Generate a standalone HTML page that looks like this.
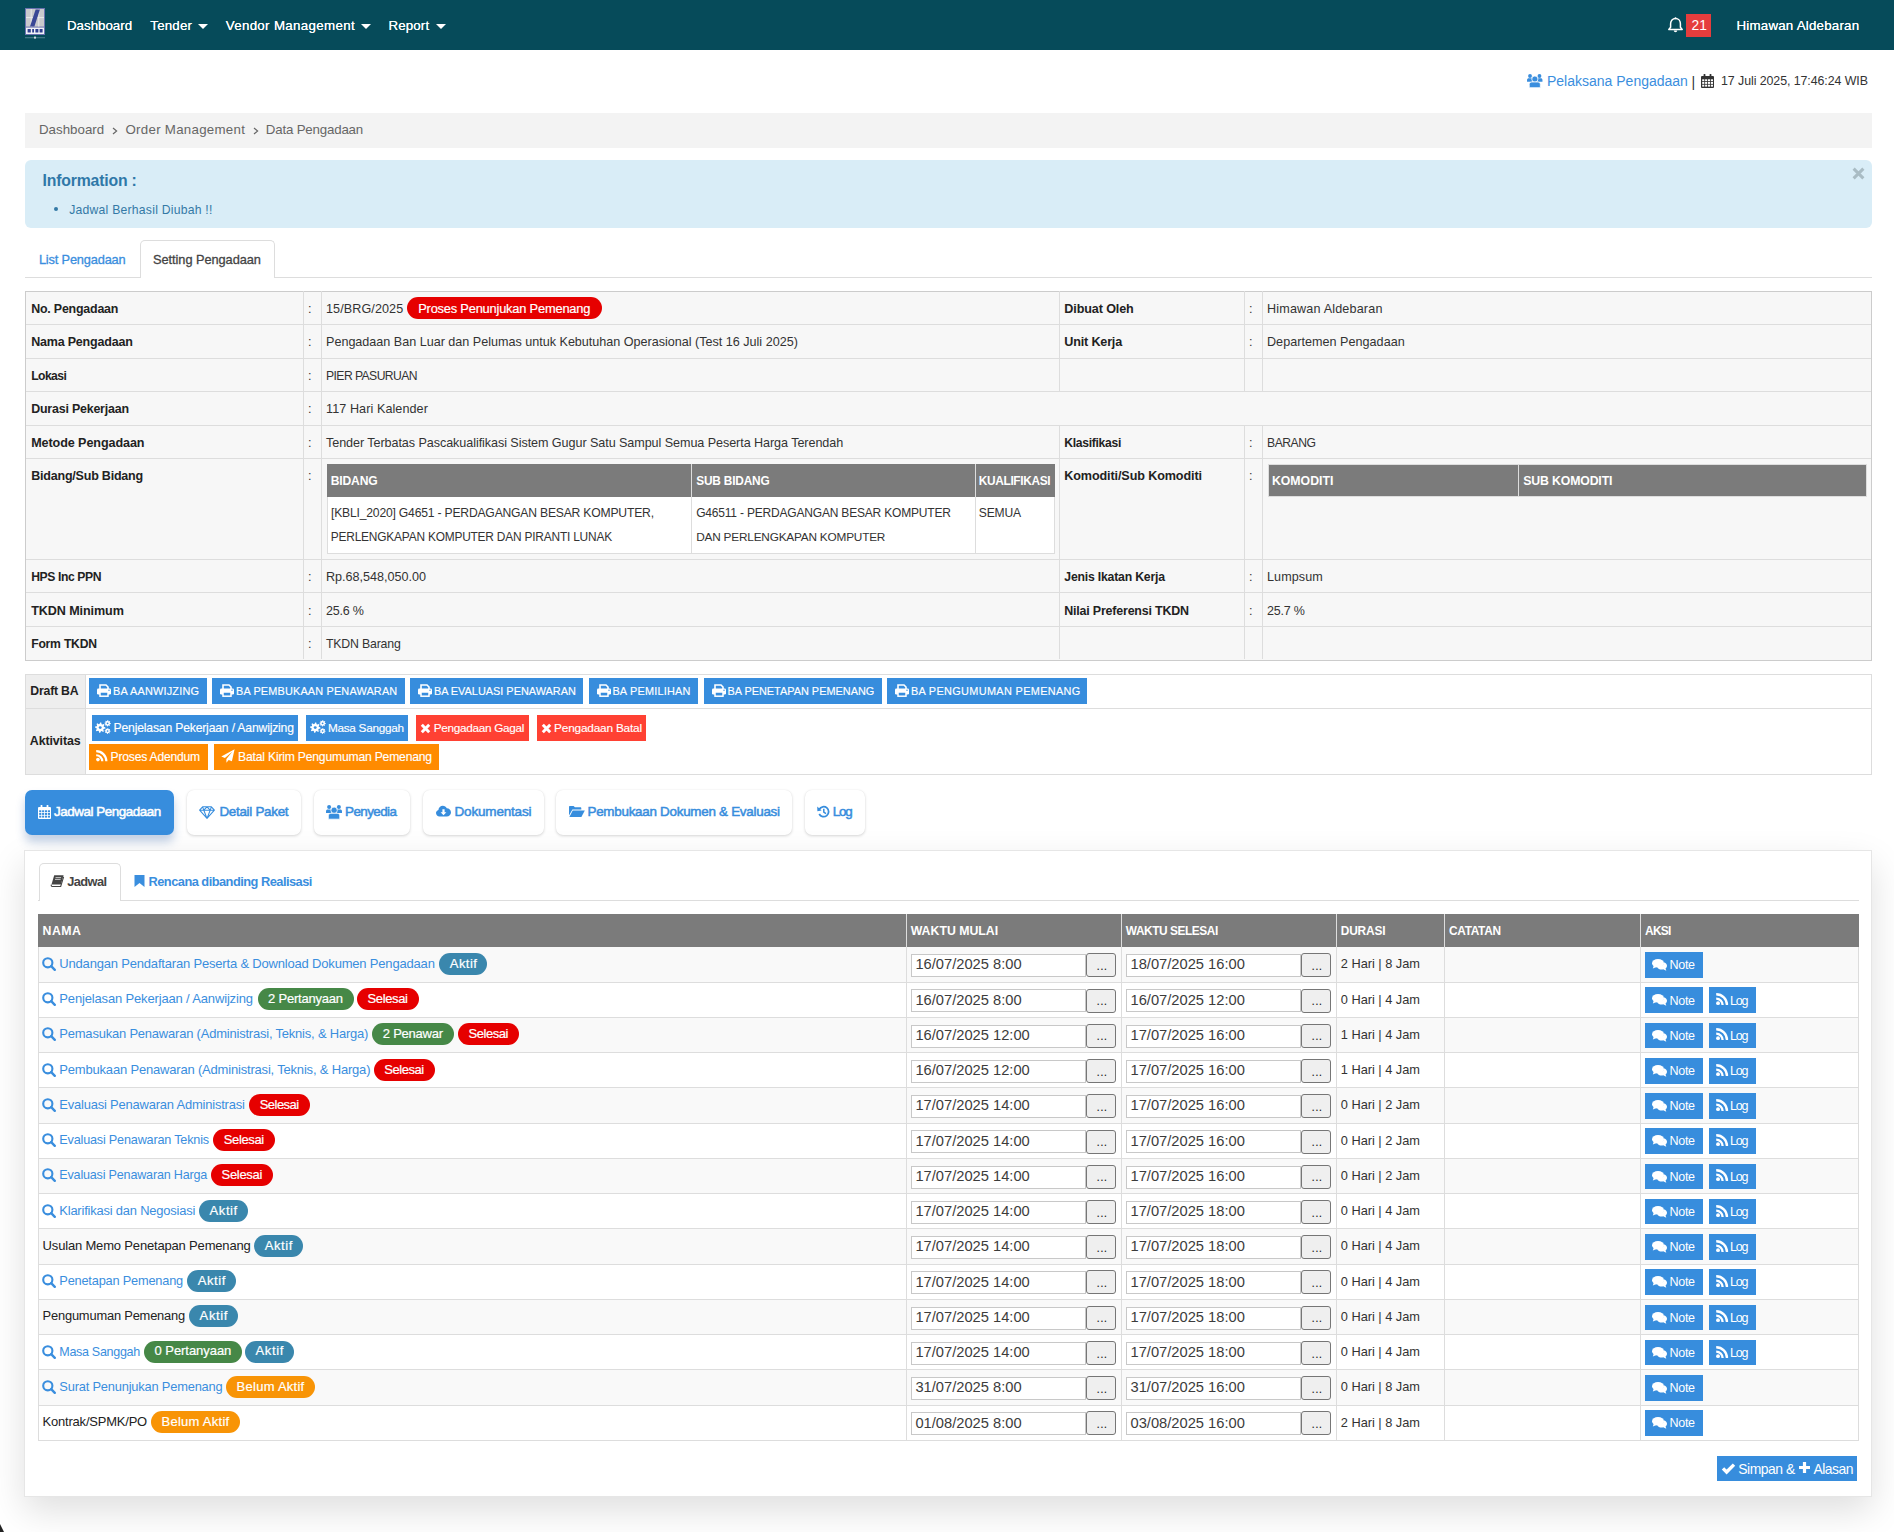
<!DOCTYPE html>
<html><head><meta charset="utf-8"><title>Data Pengadaan</title>
<style>
*{box-sizing:border-box}
html,body{margin:0;padding:0}
body{width:1894px;height:1532px;overflow:hidden;position:relative;background:#fff;font-family:"Liberation Sans",sans-serif;font-size:13px;color:#333}
div,span{white-space:nowrap}
.a{position:absolute}
svg{position:absolute;overflow:visible}
.t{position:absolute;line-height:16px;white-space:nowrap}
.caret{position:absolute;width:0;height:0;border-left:5px solid transparent;border-right:5px solid transparent;border-top:5px solid #fff}
.hl{position:absolute;height:1px;background:#ddd}
.vl{position:absolute;width:1px;background:#ddd}
.badge{position:absolute;border-radius:11px;color:#fff;height:22px;line-height:22px;text-align:center;font-size:13px;letter-spacing:-0.25px;white-space:nowrap}
.bred{background:#e60000}
.bblue{background:#3a87ad}
.bgreen{background:#468847}
.borange{background:#f89406}
.btn{position:absolute;color:#fff;white-space:nowrap}
.bb{background:#378ddd}
.br{background:#ff4133}
.bo{background:#ff8b00}
.tb{position:absolute;top:790px;height:45px;border-radius:7px;background:#fff;box-shadow:0 1px 3px rgba(0,0,0,0.16),0 0 1px rgba(0,0,0,0.08);color:#378ddd}
.tb.act{background:#378ddd;color:#fff;box-shadow:0 7px 10px rgba(40,90,160,0.28)}
.lnk{color:#3a8ede}
.inp{position:absolute;height:23px;border:1px solid #c8c8c8;background:#fff;font-size:14.7px;line-height:21px;padding-left:3px;color:#333}
.dots{position:absolute;height:24px;border:1px solid #767676;border-radius:3px;background:#efefef;font-size:12px;text-align:center;color:#000}
.sb{position:absolute;height:26px;background:#378ddd;color:#fff}
</style></head>
<body>
<div class="a" style="left:0;top:0;width:1894px;height:50px;background:#064b5a"></div>
<svg style="left:25px;top:8px" width="20" height="31" viewBox="0 0 20 31">
<rect x="0" y="0" width="20" height="27" fill="#6a72b0"/>
<rect x="1" y="1" width="18" height="17.6" fill="#c9c9cc"/>
<path d="M1 9.6H19M6.2 1V18.6M13.8 1V18.6" stroke="#ececec" stroke-width="0.9"/>
<path d="M10.6 1.5L14.9 1.5L9.4 18.6L5 18.6Z" fill="#3a4796"/>
<rect x="1" y="19.6" width="18" height="6.4" fill="#f2f2f6"/>
<path d="M2.6 21h3.2v3.6H2.6zM7.2 21h1.8v3.6H7.2zM10.4 21h3v3.6h-3zM14.6 21h3v3.6h-3z" fill="#2f3f8f"/>
<rect x="0" y="29" width="20" height="1.3" fill="#3f7583"/><rect x="9" y="28.6" width="2" height="2" fill="#cfd8dc"/>
</svg>
<div class="t" style="left:67px;top:18.29px;font-size:13.3px;color:#fff;letter-spacing:0.005px;text-shadow:0 0 0.4px #fff">Dashboard</div>
<div class="t" style="left:150.3px;top:18.29px;font-size:13.3px;color:#fff;letter-spacing:0.206px;text-shadow:0 0 0.4px #fff">Tender</div>
<div class="caret" style="left:198px;top:24px"></div>
<div class="t" style="left:225.7px;top:18.29px;font-size:13.3px;color:#fff;letter-spacing:0.34px;text-shadow:0 0 0.4px #fff">Vendor Management</div>
<div class="caret" style="left:361px;top:24px"></div>
<div class="t" style="left:388.6px;top:18.29px;font-size:13.3px;color:#fff;letter-spacing:0.116px;text-shadow:0 0 0.4px #fff">Report</div>
<div class="caret" style="left:435.5px;top:24px"></div>
<svg style="left:1667.5px;top:17px" width="15" height="16" viewBox="0 0 15 16"><path d="M7.5 1.6c-2.9 0-4.9 2.2-4.9 5.2v3.4L.8 12.4h13.4l-1.8-2.2V6.8c0-3-2-5.2-4.9-5.2z" fill="none" stroke="#fff" stroke-width="1.5" stroke-linejoin="round"/><path d="M5.8 13.6c0 1 .8 1.7 1.7 1.7s1.7-.7 1.7-1.7z" fill="#fff"/><circle cx="7.5" cy="1.3" r="1" fill="#fff"/></svg>
<div class="a" style="left:1686px;top:14px;width:25px;height:23px;background:#e53d3d"></div>
<div class="t" style="left:1691.5px;top:17.72px;font-size:13.8px;color:#fff;letter-spacing:0px;">21</div>
<div class="t" style="left:1736.5px;top:18.29px;font-size:13.3px;color:#fff;letter-spacing:0.224px;text-shadow:0 0 0.4px #fff">Himawan Aldebaran</div>
<svg style="left:1527.3px;top:74.2px" width="15.5" height="13.5" viewBox="0 0 16 14"><g fill="#3a8ede"><circle cx="3.1" cy="2.1" r="2"/><circle cx="12.9" cy="2.1" r="2"/><path d="M0 8.1V6.2C0 5.2.8 4.5 1.8 4.5h2.6c.6 0 1 .3 1 .8v2.8z"/><path d="M16 8.1V6.2c0-1-.8-1.7-1.8-1.7h-2.6c-.6 0-1 .3-1 .8v2.8z"/></g><circle cx="8.1" cy="5.3" r="3.2" fill="#3a8ede" stroke="#fff" stroke-width=".8"/><path d="M2.3 14.2v-3.3c0-1.6 1.1-2.6 2.6-2.6h6.3c1.5 0 2.6 1 2.6 2.6v3.3z" fill="#3a8ede" stroke="#fff" stroke-width=".8"/></svg>
<div class="t" style="left:1547px;top:72.65px;font-size:14px;color:#3a8ede;letter-spacing:0px;">Pelaksana Pengadaan</div>
<div class="t" style="left:1691.5px;top:73.65px;font-size:14px;color:#333;letter-spacing:0px;">|</div>
<svg style="left:1700.8px;top:74px" width="13" height="14" viewBox="0 0 13 14"><rect x="0" y="2" width="13" height="12" rx="1" fill="#333"/><rect x="2.6" y="0" width="1.8" height="3.6" rx=".5" fill="#333"/><rect x="8.6" y="0" width="1.8" height="3.6" rx=".5" fill="#333"/><rect x="2.8" y="0.6" width="1.2" height="2.4" fill="#fff" opacity="0"/><rect x="1.2" y="5.3" width="2.1" height="1.9" fill="#fff"/><rect x="4.1" y="5.3" width="2.1" height="1.9" fill="#fff"/><rect x="7.0" y="5.3" width="2.1" height="1.9" fill="#fff"/><rect x="9.9" y="5.3" width="2.1" height="1.9" fill="#fff"/><rect x="1.2" y="8.0" width="2.1" height="1.9" fill="#fff"/><rect x="4.1" y="8.0" width="2.1" height="1.9" fill="#fff"/><rect x="7.0" y="8.0" width="2.1" height="1.9" fill="#fff"/><rect x="9.9" y="8.0" width="2.1" height="1.9" fill="#fff"/><rect x="1.2" y="10.7" width="2.1" height="1.9" fill="#fff"/><rect x="4.1" y="10.7" width="2.1" height="1.9" fill="#fff"/><rect x="7.0" y="10.7" width="2.1" height="1.9" fill="#fff"/><rect x="9.9" y="10.7" width="2.1" height="1.9" fill="#fff"/></svg>
<div class="t" style="left:1721px;top:73.20px;font-size:12.4px;color:#333;letter-spacing:-0.072px;">17 Juli 2025, 17:46:24 WIB</div>
<div class="a" style="left:25px;top:113px;width:1847px;height:35px;background:#f3f3f3"></div>
<div class="t" style="left:39px;top:122.39px;font-size:13.3px;color:#666;letter-spacing:0.017px;">Dashboard</div>
<svg style="left:112px;top:127px" width="6" height="8" viewBox="0 0 6 8"><path d="M1 1l3.6 3-3.6 3" fill="none" stroke="#666" stroke-width="1.2"/></svg>
<div class="t" style="left:125.5px;top:122.39px;font-size:13.3px;color:#666;letter-spacing:0.274px;">Order Management</div>
<svg style="left:252.5px;top:127px" width="6" height="8" viewBox="0 0 6 8"><path d="M1 1l3.6 3-3.6 3" fill="none" stroke="#666" stroke-width="1.2"/></svg>
<div class="t" style="left:265.8px;top:122.39px;font-size:13.3px;color:#666;letter-spacing:-0.186px;">Data Pengadaan</div>
<div class="a" style="left:25px;top:160px;width:1847px;height:68px;background:#d9edf7;border-radius:6px"></div>
<div class="t" style="left:42.6px;top:172.53px;font-size:15.8px;color:#2f78a8;font-weight:bold;letter-spacing:-0.194px;">Information :</div>
<div class="a" style="left:54px;top:206.5px;width:4px;height:4px;border-radius:50%;background:#3479a6"></div>
<div class="t" style="left:69.2px;top:201.57px;font-size:12.2px;color:#3479a6;letter-spacing:0.236px;">Jadwal Berhasil Diubah !!</div>
<svg style="left:1851.5px;top:166.5px" width="13" height="13" viewBox="0 0 12 12"><path d="M1.5 1.5L10.5 10.5M10.5 1.5L1.5 10.5" stroke="#a9bcc4" stroke-width="2.8"/></svg>
<div class="hl" style="left:25px;top:277px;width:1847px;background:#ddd"></div>
<div class="a" style="left:140px;top:240px;width:135px;height:38px;border:1px solid #ddd;border-bottom:none;border-radius:5px 5px 0 0;background:#fff"></div>
<div class="t" style="left:38.9px;top:251.86px;font-size:12.8px;color:#3a8ede;letter-spacing:-0.166px;-webkit-text-stroke:0.3px #3a8ede">List Pengadaan</div>
<div class="t" style="left:153px;top:251.86px;font-size:12.8px;color:#444;letter-spacing:-0.055px;-webkit-text-stroke:0.3px #444">Setting Pengadaan</div>
<div class="a" style="left:25px;top:291px;width:1847px;height:369.5px;background:#f7f7f7;border:1px solid #ccc"></div>
<div class="hl" style="left:26px;top:324px;width:1845px"></div>
<div class="hl" style="left:26px;top:358px;width:1845px"></div>
<div class="hl" style="left:26px;top:391px;width:1845px"></div>
<div class="hl" style="left:26px;top:425px;width:1845px"></div>
<div class="hl" style="left:26px;top:458px;width:1845px"></div>
<div class="hl" style="left:26px;top:559px;width:1845px"></div>
<div class="hl" style="left:26px;top:592px;width:1845px"></div>
<div class="hl" style="left:26px;top:626px;width:1845px"></div>
<div class="vl" style="left:303px;top:291px;height:33px"></div>
<div class="vl" style="left:321px;top:291px;height:33px"></div>
<div class="vl" style="left:1059px;top:291px;height:33px"></div>
<div class="vl" style="left:1244px;top:291px;height:33px"></div>
<div class="vl" style="left:1262px;top:291px;height:33px"></div>
<div class="vl" style="left:303px;top:324px;height:34px"></div>
<div class="vl" style="left:321px;top:324px;height:34px"></div>
<div class="vl" style="left:1059px;top:324px;height:34px"></div>
<div class="vl" style="left:1244px;top:324px;height:34px"></div>
<div class="vl" style="left:1262px;top:324px;height:34px"></div>
<div class="vl" style="left:303px;top:358px;height:33px"></div>
<div class="vl" style="left:321px;top:358px;height:33px"></div>
<div class="vl" style="left:1059px;top:358px;height:33px"></div>
<div class="vl" style="left:1244px;top:358px;height:33px"></div>
<div class="vl" style="left:1262px;top:358px;height:33px"></div>
<div class="vl" style="left:303px;top:391px;height:34px"></div>
<div class="vl" style="left:321px;top:391px;height:34px"></div>
<div class="vl" style="left:303px;top:425px;height:33px"></div>
<div class="vl" style="left:321px;top:425px;height:33px"></div>
<div class="vl" style="left:1059px;top:425px;height:33px"></div>
<div class="vl" style="left:1244px;top:425px;height:33px"></div>
<div class="vl" style="left:1262px;top:425px;height:33px"></div>
<div class="vl" style="left:303px;top:458px;height:101px"></div>
<div class="vl" style="left:321px;top:458px;height:101px"></div>
<div class="vl" style="left:1059px;top:458px;height:101px"></div>
<div class="vl" style="left:1244px;top:458px;height:101px"></div>
<div class="vl" style="left:1262px;top:458px;height:101px"></div>
<div class="vl" style="left:303px;top:559px;height:33px"></div>
<div class="vl" style="left:321px;top:559px;height:33px"></div>
<div class="vl" style="left:1059px;top:559px;height:33px"></div>
<div class="vl" style="left:1244px;top:559px;height:33px"></div>
<div class="vl" style="left:1262px;top:559px;height:33px"></div>
<div class="vl" style="left:303px;top:592px;height:34px"></div>
<div class="vl" style="left:321px;top:592px;height:34px"></div>
<div class="vl" style="left:1059px;top:592px;height:34px"></div>
<div class="vl" style="left:1244px;top:592px;height:34px"></div>
<div class="vl" style="left:1262px;top:592px;height:34px"></div>
<div class="vl" style="left:303px;top:626px;height:33px"></div>
<div class="vl" style="left:321px;top:626px;height:33px"></div>
<div class="vl" style="left:1059px;top:626px;height:33px"></div>
<div class="vl" style="left:1244px;top:626px;height:33px"></div>
<div class="vl" style="left:1262px;top:626px;height:33px"></div>
<div class="t" style="left:31.2px;top:300.85px;font-size:12.41px;color:#222;font-weight:bold;letter-spacing:-0.202px;">No. Pengadaan</div>
<div class="t" style="left:308px;top:300.78px;font-size:12.6px;color:#333;letter-spacing:0px;">:</div>
<div class="t" style="left:326px;top:300.78px;font-size:12.6px;color:#333;letter-spacing:0.087px;">15/BRG/2025</div>
<div class="t" style="left:31.2px;top:334.47px;font-size:12.5px;color:#222;font-weight:bold;letter-spacing:-0.201px;">Nama Pengadaan</div>
<div class="t" style="left:308px;top:334.43px;font-size:12.6px;color:#333;letter-spacing:0px;">:</div>
<div class="t" style="left:326px;top:334.43px;font-size:12.6px;color:#333;letter-spacing:-0.01px;">Pengadaan Ban Luar dan Pelumas untuk Kebutuhan Operasional (Test 16 Juli 2025)</div>
<div class="t" style="left:31.2px;top:367.99px;font-size:12.16px;color:#222;font-weight:bold;letter-spacing:-0.563px;">Lokasi</div>
<div class="t" style="left:308px;top:367.83px;font-size:12.6px;color:#333;letter-spacing:0px;">:</div>
<div class="t" style="left:326px;top:367.99px;font-size:12.16px;color:#333;letter-spacing:-0.567px;">PIER PASURUAN</div>
<div class="t" style="left:31.2px;top:401.44px;font-size:12.43px;color:#222;font-weight:bold;letter-spacing:-0.202px;">Durasi Pekerjaan</div>
<div class="t" style="left:308px;top:401.38px;font-size:12.6px;color:#333;letter-spacing:0px;">:</div>
<div class="t" style="left:326px;top:401.38px;font-size:12.6px;color:#333;letter-spacing:0.083px;">117 Hari Kalender</div>
<div class="t" style="left:31.2px;top:434.98px;font-size:12.6px;color:#222;font-weight:bold;letter-spacing:-0.098px;">Metode Pengadaan</div>
<div class="t" style="left:308px;top:434.98px;font-size:12.6px;color:#333;letter-spacing:0px;">:</div>
<div class="t" style="left:326px;top:434.98px;font-size:12.6px;color:#333;letter-spacing:-0.07px;">Tender Terbatas Pascakualifikasi Sistem Gugur Satu Sampul Semua Peserta Harga Terendah</div>
<div class="t" style="left:31.2px;top:569.04px;font-size:12.16px;color:#222;font-weight:bold;letter-spacing:-0.401px;">HPS Inc PPN</div>
<div class="t" style="left:308px;top:568.88px;font-size:12.6px;color:#333;letter-spacing:0px;">:</div>
<div class="t" style="left:326px;top:568.88px;font-size:12.6px;color:#333;letter-spacing:-0.003px;">Rp.68,548,050.00</div>
<div class="t" style="left:31.2px;top:602.53px;font-size:12.6px;color:#222;font-weight:bold;letter-spacing:-0.095px;">TKDN Minimum</div>
<div class="t" style="left:308px;top:602.53px;font-size:12.6px;color:#333;letter-spacing:0px;">:</div>
<div class="t" style="left:326px;top:602.56px;font-size:12.53px;color:#333;letter-spacing:-0.194px;">25.6 %</div>
<div class="t" style="left:31.2px;top:636.24px;font-size:12.16px;color:#222;font-weight:bold;letter-spacing:-0.216px;">Form TKDN</div>
<div class="t" style="left:308px;top:636.08px;font-size:12.6px;color:#333;letter-spacing:0px;">:</div>
<div class="t" style="left:326px;top:636.17px;font-size:12.34px;color:#333;letter-spacing:-0.195px;">TKDN Barang</div>
<div class="t" style="left:1064.3px;top:300.78px;font-size:12.6px;color:#222;font-weight:bold;letter-spacing:-0.117px;">Dibuat Oleh</div>
<div class="t" style="left:1249px;top:300.78px;font-size:12.6px;color:#333;letter-spacing:0px;">:</div>
<div class="t" style="left:1267px;top:300.78px;font-size:12.6px;color:#333;letter-spacing:0.168px;">Himawan Aldebaran</div>
<div class="t" style="left:1064.3px;top:334.43px;font-size:12.6px;color:#222;font-weight:bold;letter-spacing:-0.176px;">Unit Kerja</div>
<div class="t" style="left:1249px;top:334.43px;font-size:12.6px;color:#333;letter-spacing:0px;">:</div>
<div class="t" style="left:1267px;top:334.43px;font-size:12.6px;color:#333;letter-spacing:0.025px;">Departemen Pengadaan</div>
<div class="t" style="left:1064.3px;top:435.14px;font-size:12.16px;color:#222;font-weight:bold;letter-spacing:-0.314px;">Klasifikasi</div>
<div class="t" style="left:1249px;top:434.98px;font-size:12.6px;color:#333;letter-spacing:0px;">:</div>
<div class="t" style="left:1267px;top:435.14px;font-size:12.16px;color:#333;letter-spacing:-0.469px;">BARANG</div>
<div class="t" style="left:1064.3px;top:569.01px;font-size:12.25px;color:#222;font-weight:bold;letter-spacing:-0.205px;">Jenis Ikatan Kerja</div>
<div class="t" style="left:1249px;top:568.88px;font-size:12.6px;color:#333;letter-spacing:0px;">:</div>
<div class="t" style="left:1267px;top:568.88px;font-size:12.6px;color:#333;letter-spacing:0.067px;">Lumpsum</div>
<div class="t" style="left:1064.3px;top:602.58px;font-size:12.46px;color:#222;font-weight:bold;letter-spacing:-0.202px;">Nilai Preferensi TKDN</div>
<div class="t" style="left:1249px;top:602.53px;font-size:12.6px;color:#333;letter-spacing:0px;">:</div>
<div class="t" style="left:1267px;top:602.57px;font-size:12.5px;color:#333;letter-spacing:-0.204px;">25.7 %</div>
<div class="t" style="left:31.2px;top:467.67px;font-size:12.5px;color:#222;font-weight:bold;letter-spacing:-0.205px;">Bidang/Sub Bidang</div>
<div class="t" style="left:308px;top:467.63px;font-size:12.6px;color:#333;letter-spacing:0px;">:</div>
<div class="t" style="left:1064.3px;top:467.63px;font-size:12.6px;color:#222;font-weight:bold;letter-spacing:-0.111px;">Komoditi/Sub Komoditi</div>
<div class="t" style="left:1249px;top:467.63px;font-size:12.6px;color:#333;letter-spacing:0px;">:</div>
<div class="badge bred" style="left:407.3px;top:297px;width:194.3px;height:22.3px"></div>
<div class="t" style="left:418.2px;top:300.75px;font-size:12.85px;color:#fff;letter-spacing:-0.196px;-webkit-text-stroke:0.2px #fff">Proses Penunjukan Pemenang</div>
<div class="a" style="left:326.5px;top:463.9px;width:728px;height:90.5px;background:#fff;border:1px solid #ddd"></div>
<div class="a" style="left:326.5px;top:463.9px;width:728px;height:33px;background:#7b7b7b"></div>
<div class="vl" style="left:691px;top:463.9px;height:90.5px"></div>
<div class="vl" style="left:974.5px;top:463.9px;height:90.5px"></div>
<div class="t" style="left:330.8px;top:472.79px;font-size:12.14px;color:#fff;font-weight:bold;letter-spacing:-0.186px;">BIDANG</div>
<div class="t" style="left:696.2px;top:472.88px;font-size:11.89px;color:#fff;font-weight:bold;letter-spacing:-0.191px;">SUB BIDANG</div>
<div class="t" style="left:978.8px;top:472.89px;font-size:11.87px;color:#fff;font-weight:bold;letter-spacing:-0.331px;">KUALIFIKASI</div>
<div class="t" style="left:331px;top:504.79px;font-size:12.16px;color:#333;letter-spacing:-0.204px;">[KBLI_2020] G4651 - PERDAGANGAN BESAR KOMPUTER,</div>
<div class="t" style="left:330.8px;top:529.37px;font-size:11.92px;color:#333;letter-spacing:-0.2px;">PERLENGKAPAN KOMPUTER DAN PIRANTI LUNAK</div>
<div class="t" style="left:696.2px;top:504.83px;font-size:12.03px;color:#333;letter-spacing:-0.201px;">G46511 - PERDAGANGAN BESAR KOMPUTER</div>
<div class="t" style="left:696.2px;top:529.40px;font-size:11.82px;color:#333;letter-spacing:-0.203px;">DAN PERLENGKAPAN KOMPUTER</div>
<div class="t" style="left:978.8px;top:504.81px;font-size:12.1px;color:#333;letter-spacing:-0.204px;">SEMUA</div>
<div class="a" style="left:1268px;top:464px;width:598.5px;height:33px;background:#7b7b7b;border:1px solid #ddd"></div>
<div class="vl" style="left:1518px;top:464px;height:33px"></div>
<div class="t" style="left:1271.9px;top:472.74px;font-size:12.3px;color:#fff;font-weight:bold;letter-spacing:0.002px;">KOMODITI</div>
<div class="t" style="left:1523.3px;top:472.74px;font-size:12.3px;color:#fff;font-weight:bold;letter-spacing:-0.16px;">SUB KOMODITI</div>
<div class="a" style="left:25px;top:673.5px;width:1847px;height:101px;border:1px solid #ddd;background:#fff"></div>
<div class="a" style="left:26px;top:674.5px;width:59.5px;height:99px;background:#eee"></div>
<div class="vl" style="left:85.4px;top:673.5px;height:101px"></div>
<div class="hl" style="left:26px;top:708px;width:1845px"></div>
<div class="t" style="left:30.3px;top:682.55px;font-size:12.26px;color:#222;font-weight:bold;letter-spacing:-0.198px;">Draft BA</div>
<div class="t" style="left:29.8px;top:733.20px;font-size:12.4px;color:#222;font-weight:bold;letter-spacing:-0.095px;">Aktivitas</div>
<div class="btn bb" style="left:89.2px;top:678.1px;width:117.7px;height:25.9px"></div><svg style="left:96.8px;top:683.6px" width="14.0" height="13" viewBox="0 0 14 13"><rect x="0" y="4.5" width="14" height="6" rx="1.3" fill="#fff"/><path d="M3 5V1h6l2 2v2" fill="none" stroke="#fff" stroke-width="1.6"/><rect x="3" y="8" width="8" height="4.2" fill="#378ddd" stroke="#fff" stroke-width="1.5"/><circle cx="12" cy="6.3" r="0.7" fill="#378ddd"/></svg><div class="t" style="left:113px;top:683.27px;font-size:10.9px;color:#fff;letter-spacing:0.207px;-webkit-text-stroke:0.15px #fff">BA AANWIJZING</div>
<div class="btn bb" style="left:212.1px;top:678.1px;width:192.7px;height:25.9px"></div><svg style="left:219.7px;top:683.6px" width="14.0" height="13" viewBox="0 0 14 13"><rect x="0" y="4.5" width="14" height="6" rx="1.3" fill="#fff"/><path d="M3 5V1h6l2 2v2" fill="none" stroke="#fff" stroke-width="1.6"/><rect x="3" y="8" width="8" height="4.2" fill="#378ddd" stroke="#fff" stroke-width="1.5"/><circle cx="12" cy="6.3" r="0.7" fill="#378ddd"/></svg><div class="t" style="left:236px;top:683.27px;font-size:10.9px;color:#fff;letter-spacing:0.164px;-webkit-text-stroke:0.15px #fff">BA PEMBUKAAN PENAWARAN</div>
<div class="btn bb" style="left:410.1px;top:678.1px;width:172.9px;height:25.9px"></div><svg style="left:417.70000000000005px;top:683.6px" width="14.0" height="13" viewBox="0 0 14 13"><rect x="0" y="4.5" width="14" height="6" rx="1.3" fill="#fff"/><path d="M3 5V1h6l2 2v2" fill="none" stroke="#fff" stroke-width="1.6"/><rect x="3" y="8" width="8" height="4.2" fill="#378ddd" stroke="#fff" stroke-width="1.5"/><circle cx="12" cy="6.3" r="0.7" fill="#378ddd"/></svg><div class="t" style="left:433.9px;top:683.27px;font-size:10.9px;color:#fff;letter-spacing:0.004px;-webkit-text-stroke:0.15px #fff">BA EVALUASI PENAWARAN</div>
<div class="btn bb" style="left:589px;top:678.1px;width:109.1px;height:25.9px"></div><svg style="left:596.6px;top:683.6px" width="14.0" height="13" viewBox="0 0 14 13"><rect x="0" y="4.5" width="14" height="6" rx="1.3" fill="#fff"/><path d="M3 5V1h6l2 2v2" fill="none" stroke="#fff" stroke-width="1.6"/><rect x="3" y="8" width="8" height="4.2" fill="#378ddd" stroke="#fff" stroke-width="1.5"/><circle cx="12" cy="6.3" r="0.7" fill="#378ddd"/></svg><div class="t" style="left:612.4px;top:683.27px;font-size:10.9px;color:#fff;letter-spacing:0.213px;-webkit-text-stroke:0.15px #fff">BA PEMILIHAN</div>
<div class="btn bb" style="left:704.1px;top:678.1px;width:177.9px;height:25.9px"></div><svg style="left:711.7px;top:683.6px" width="14.0" height="13" viewBox="0 0 14 13"><rect x="0" y="4.5" width="14" height="6" rx="1.3" fill="#fff"/><path d="M3 5V1h6l2 2v2" fill="none" stroke="#fff" stroke-width="1.6"/><rect x="3" y="8" width="8" height="4.2" fill="#378ddd" stroke="#fff" stroke-width="1.5"/><circle cx="12" cy="6.3" r="0.7" fill="#378ddd"/></svg><div class="t" style="left:727.4px;top:683.27px;font-size:10.9px;color:#fff;letter-spacing:0.012px;-webkit-text-stroke:0.15px #fff">BA PENETAPAN PEMENANG</div>
<div class="btn bb" style="left:887px;top:678.1px;width:200.1px;height:25.9px"></div><svg style="left:894.6px;top:683.6px" width="14.0" height="13" viewBox="0 0 14 13"><rect x="0" y="4.5" width="14" height="6" rx="1.3" fill="#fff"/><path d="M3 5V1h6l2 2v2" fill="none" stroke="#fff" stroke-width="1.6"/><rect x="3" y="8" width="8" height="4.2" fill="#378ddd" stroke="#fff" stroke-width="1.5"/><circle cx="12" cy="6.3" r="0.7" fill="#378ddd"/></svg><div class="t" style="left:910.9px;top:683.27px;font-size:10.9px;color:#fff;letter-spacing:0.343px;-webkit-text-stroke:0.15px #fff">BA PENGUMUMAN PEMENANG</div>
<div class="btn bb" style="left:92px;top:715.2px;width:206.0px;height:25.5px"></div><svg style="left:95.2px;top:720px" width="16" height="14" viewBox="0 0 16 14"><polygon points="10.40,7.60 10.30,8.61 8.66,9.03 8.31,9.68 8.88,11.28 8.09,11.92 6.63,11.06 5.93,11.27 5.20,12.80 4.19,12.70 3.77,11.06 3.12,10.71 1.52,11.28 0.88,10.49 1.74,9.03 1.53,8.33 0.00,7.60 0.10,6.59 1.74,6.17 2.09,5.52 1.52,3.92 2.31,3.28 3.77,4.14 4.47,3.93 5.20,2.40 6.21,2.50 6.63,4.14 7.28,4.49 8.88,3.92 9.52,4.71 8.66,6.17 8.87,6.87" fill="#fff"/><circle cx="5.2" cy="7.6" r="1.46" fill="#378ddd"/><polygon points="15.80,3.30 15.74,3.92 14.73,4.18 14.52,4.58 14.86,5.56 14.38,5.96 13.48,5.43 13.05,5.56 12.60,6.50 11.98,6.44 11.72,5.43 11.32,5.22 10.34,5.56 9.94,5.08 10.47,4.18 10.34,3.75 9.40,3.30 9.46,2.68 10.47,2.42 10.68,2.02 10.34,1.04 10.82,0.64 11.72,1.17 12.15,1.04 12.60,0.10 13.22,0.16 13.48,1.17 13.88,1.38 14.86,1.04 15.26,1.52 14.73,2.42 14.86,2.85" fill="#fff"/><circle cx="12.6" cy="3.3" r="0.90" fill="#378ddd"/><polygon points="15.60,11.00 15.54,11.59 14.60,11.83 14.40,12.20 14.72,13.12 14.27,13.49 13.43,13.00 13.02,13.12 12.60,14.00 12.01,13.94 11.77,13.00 11.40,12.80 10.48,13.12 10.11,12.67 10.60,11.83 10.48,11.42 9.60,11.00 9.66,10.41 10.60,10.17 10.80,9.80 10.48,8.88 10.93,8.51 11.77,9.00 12.18,8.88 12.60,8.00 13.19,8.06 13.43,9.00 13.80,9.20 14.72,8.88 15.09,9.33 14.60,10.17 14.72,10.58" fill="#fff"/><circle cx="12.6" cy="11" r="0.84" fill="#378ddd"/></svg><div class="t" style="left:113.5px;top:720.32px;font-size:12.2px;color:#fff;letter-spacing:-0.182px;-webkit-text-stroke:0.15px #fff">Penjelasan Pekerjaan / Aanwijzing</div>
<div class="btn bb" style="left:306.1px;top:715.2px;width:101.8px;height:25.5px"></div><svg style="left:309.5px;top:720px" width="16" height="14" viewBox="0 0 16 14"><polygon points="10.40,7.60 10.30,8.61 8.66,9.03 8.31,9.68 8.88,11.28 8.09,11.92 6.63,11.06 5.93,11.27 5.20,12.80 4.19,12.70 3.77,11.06 3.12,10.71 1.52,11.28 0.88,10.49 1.74,9.03 1.53,8.33 0.00,7.60 0.10,6.59 1.74,6.17 2.09,5.52 1.52,3.92 2.31,3.28 3.77,4.14 4.47,3.93 5.20,2.40 6.21,2.50 6.63,4.14 7.28,4.49 8.88,3.92 9.52,4.71 8.66,6.17 8.87,6.87" fill="#fff"/><circle cx="5.2" cy="7.6" r="1.46" fill="#378ddd"/><polygon points="15.80,3.30 15.74,3.92 14.73,4.18 14.52,4.58 14.86,5.56 14.38,5.96 13.48,5.43 13.05,5.56 12.60,6.50 11.98,6.44 11.72,5.43 11.32,5.22 10.34,5.56 9.94,5.08 10.47,4.18 10.34,3.75 9.40,3.30 9.46,2.68 10.47,2.42 10.68,2.02 10.34,1.04 10.82,0.64 11.72,1.17 12.15,1.04 12.60,0.10 13.22,0.16 13.48,1.17 13.88,1.38 14.86,1.04 15.26,1.52 14.73,2.42 14.86,2.85" fill="#fff"/><circle cx="12.6" cy="3.3" r="0.90" fill="#378ddd"/><polygon points="15.60,11.00 15.54,11.59 14.60,11.83 14.40,12.20 14.72,13.12 14.27,13.49 13.43,13.00 13.02,13.12 12.60,14.00 12.01,13.94 11.77,13.00 11.40,12.80 10.48,13.12 10.11,12.67 10.60,11.83 10.48,11.42 9.60,11.00 9.66,10.41 10.60,10.17 10.80,9.80 10.48,8.88 10.93,8.51 11.77,9.00 12.18,8.88 12.60,8.00 13.19,8.06 13.43,9.00 13.80,9.20 14.72,8.88 15.09,9.33 14.60,10.17 14.72,10.58" fill="#fff"/><circle cx="12.6" cy="11" r="0.84" fill="#378ddd"/></svg><div class="t" style="left:328px;top:720.47px;font-size:11.77px;color:#fff;letter-spacing:-0.287px;-webkit-text-stroke:0.15px #fff">Masa Sanggah</div>
<div class="btn br" style="left:416.2px;top:715.2px;width:112.7px;height:25.5px"></div><svg style="left:419.5px;top:722.5px" width="11" height="11" viewBox="0 0 11 11"><path d="M1.8 1.8L9.2 9.2M9.2 1.8L1.8 9.2" stroke="#fff" stroke-width="3"/></svg><div class="t" style="left:433.7px;top:720.47px;font-size:11.77px;color:#fff;letter-spacing:-0.291px;-webkit-text-stroke:0.15px #fff">Pengadaan Gagal</div>
<div class="btn br" style="left:537.1px;top:715.2px;width:108.9px;height:25.5px"></div><svg style="left:540.5px;top:722.5px" width="11" height="11" viewBox="0 0 11 11"><path d="M1.8 1.8L9.2 9.2M9.2 1.8L1.8 9.2" stroke="#fff" stroke-width="3"/></svg><div class="t" style="left:554.1px;top:720.45px;font-size:11.84px;color:#fff;letter-spacing:-0.198px;-webkit-text-stroke:0.15px #fff">Pengadaan Batal</div>
<div class="btn bo" style="left:89.2px;top:744.2px;width:118.8px;height:25.7px"></div><svg style="left:96px;top:750px" width="11.5" height="11.5" viewBox="0 0 12 12"><circle cx="2" cy="10" r="1.9" fill="#fff"/><path d="M0.2 5.5A6.3 6.3 0 0 1 6.5 11.8M0.2 1.2A10.6 10.6 0 0 1 10.8 11.8" fill="none" stroke="#fff" stroke-width="2.3"/></svg><div class="t" style="left:110.6px;top:749.46px;font-size:12.1px;color:#fff;letter-spacing:-0.201px;-webkit-text-stroke:0.15px #fff">Proses Adendum</div>
<div class="btn bo" style="left:214.1px;top:744.2px;width:224.7px;height:25.7px"></div><svg style="left:221px;top:749px" width="14" height="14" viewBox="0 0 14 14"><path d="M13.6 0.3L0.3 7.6l3.6 1.4 7.6-6.4-6.1 7.3v3.8l2.3-2.7 3.2 1.3z" fill="#fff"/></svg><div class="t" style="left:238.1px;top:749.43px;font-size:12.17px;color:#fff;letter-spacing:-0.201px;-webkit-text-stroke:0.15px #fff">Batal Kirim Pengumuman Pemenang</div>
<div class="tb act" style="left:25px;width:149px"></div><svg style="left:37.5px;top:805px" width="13" height="14" viewBox="0 0 13 14"><rect x="0" y="2" width="13" height="12" rx="1" fill="#fff"/><rect x="2.6" y="0" width="1.8" height="3.6" rx=".5" fill="#fff"/><rect x="8.6" y="0" width="1.8" height="3.6" rx=".5" fill="#fff"/><rect x="2.8" y="0.6" width="1.2" height="2.4" fill="#378ddd" opacity="0"/><rect x="1.2" y="5.3" width="2.1" height="1.9" fill="#378ddd"/><rect x="4.1" y="5.3" width="2.1" height="1.9" fill="#378ddd"/><rect x="7.0" y="5.3" width="2.1" height="1.9" fill="#378ddd"/><rect x="9.9" y="5.3" width="2.1" height="1.9" fill="#378ddd"/><rect x="1.2" y="8.0" width="2.1" height="1.9" fill="#378ddd"/><rect x="4.1" y="8.0" width="2.1" height="1.9" fill="#378ddd"/><rect x="7.0" y="8.0" width="2.1" height="1.9" fill="#378ddd"/><rect x="9.9" y="8.0" width="2.1" height="1.9" fill="#378ddd"/><rect x="1.2" y="10.7" width="2.1" height="1.9" fill="#378ddd"/><rect x="4.1" y="10.7" width="2.1" height="1.9" fill="#378ddd"/><rect x="7.0" y="10.7" width="2.1" height="1.9" fill="#378ddd"/><rect x="9.9" y="10.7" width="2.1" height="1.9" fill="#378ddd"/></svg><div class="t" style="left:54.1px;top:804.35px;font-size:13.41px;color:#fff;letter-spacing:-0.47px;-webkit-text-stroke:0.5px #fff">Jadwal Pengadaan</div>
<div class="tb" style="left:187px;width:114px"></div><svg style="left:198.8px;top:805.6px" width="16" height="13" viewBox="0 0 16 13"><path d="M3.6 0.8h8.8l3 3.4L8 12.4 0.6 4.2z M0.6 4.2h14.8 M4.8 4.2L8 12.4l3.2-8.2 M3.6 0.8l1.2 3.4L8 0.8l3.2 3.4 1.2-3.4" fill="none" stroke="#378ddd" stroke-width="1.05" stroke-linejoin="round"/></svg><div class="t" style="left:219.4px;top:804.35px;font-size:13.41px;color:#378ddd;letter-spacing:-0.28px;-webkit-text-stroke:0.5px #378ddd">Detail Paket</div>
<div class="tb" style="left:314px;width:96px"></div><svg style="left:325.9px;top:804.8px" width="16" height="14" viewBox="0 0 16 14"><g fill="#378ddd"><circle cx="3.1" cy="2.1" r="2"/><circle cx="12.9" cy="2.1" r="2"/><path d="M0 8.1V6.2C0 5.2.8 4.5 1.8 4.5h2.6c.6 0 1 .3 1 .8v2.8z"/><path d="M16 8.1V6.2c0-1-.8-1.7-1.8-1.7h-2.6c-.6 0-1 .3-1 .8v2.8z"/></g><circle cx="8.1" cy="5.3" r="3.2" fill="#378ddd" stroke="#fff" stroke-width=".8"/><path d="M2.3 14.2v-3.3c0-1.6 1.1-2.6 2.6-2.6h6.3c1.5 0 2.6 1 2.6 2.6v3.3z" fill="#378ddd" stroke="#fff" stroke-width=".8"/></svg><div class="t" style="left:345px;top:804.35px;font-size:13.41px;color:#378ddd;letter-spacing:-0.558px;-webkit-text-stroke:0.5px #378ddd">Penyedia</div>
<div class="tb" style="left:423px;width:121px"></div><svg style="left:436px;top:805.2px" width="15" height="12" viewBox="0 0 15 12"><path d="M3.5 11.5C1.6 11.5 0 10 0 8.1c0-1.5 1-2.8 2.4-3.2C2.6 2.6 4.5 0.8 6.8 0.8c1.8 0 3.3 1 4 2.5 2.3 0 4.2 1.9 4.2 4.2s-1.9 4-4.2 4z" fill="#378ddd"/><path d="M6.4 4.2h2.2v3h1.8L7.5 10.2 4.6 7.2h1.8z" fill="#fff"/></svg><div class="t" style="left:454.5px;top:804.31px;font-size:13.54px;color:#378ddd;letter-spacing:-0.197px;-webkit-text-stroke:0.5px #378ddd">Dokumentasi</div>
<div class="tb" style="left:556px;width:236px"></div><svg style="left:568.5px;top:805.6px" width="16" height="11" viewBox="0 0 16 11"><path d="M0 1C0 .4.4 0 1 0h3.6l1.3 1.2h5.4c.6 0 1 .4 1 1V3.6H3.4L0 9.4z" fill="#378ddd"/><path d="M3.7 4.5h12.1L12.4 11H0.4z" fill="#378ddd"/></svg><div class="t" style="left:587.5px;top:804.35px;font-size:13.41px;color:#378ddd;letter-spacing:-0.267px;-webkit-text-stroke:0.5px #378ddd">Pembukaan Dokumen &amp; Evaluasi</div>
<div class="tb" style="left:805px;width:60px"></div><svg style="left:816.8px;top:805.3px" width="13" height="13" viewBox="0 0 13 13"><path d="M2.3 4.2A5 5 0 1 1 2.2 9" fill="none" stroke="#378ddd" stroke-width="1.8"/><path d="M0.2 1.6L4.6 5.4 0.4 6.2z" fill="#378ddd"/><path d="M6.8 3.8v3.3l2.2 1.5" fill="none" stroke="#378ddd" stroke-width="1.5"/></svg><div class="t" style="left:832.8px;top:804.35px;font-size:13.41px;color:#378ddd;letter-spacing:-1.238px;-webkit-text-stroke:0.5px #378ddd">Log</div>
<div class="a" style="left:24.4px;top:850px;width:1847.8px;height:646.5px;background:#fff;border:1px solid #e6e6e6;box-shadow:0 14px 34px rgba(0,0,0,0.13)"></div>
<div class="hl" style="left:38px;top:900px;width:1821px"></div>
<div class="a" style="left:38.5px;top:863px;width:82.5px;height:38px;border:1px solid #ddd;border-bottom:none;border-radius:5px 5px 0 0;background:#fff"></div>
<svg style="left:51px;top:874.5px" width="13" height="12" viewBox="0 0 13 12"><path d="M3.2 0.3h9.4l-2.8 9.2H0.5z" fill="#444"/><path d="M0.4 9.6l-.2 1c0 .4.3.9.9.9h8.6l2.9-9.6" fill="none" stroke="#444" stroke-width="1.1"/><path d="M4.5 2.6h5.6M4 4.4h5.6" stroke="#fff" stroke-width=".7"/></svg>
<div class="t" style="left:67.2px;top:873.55px;font-size:12.83px;color:#444;font-weight:bold;letter-spacing:-0.579px;">Jadwal</div>
<svg style="left:134px;top:875px" width="11" height="12" viewBox="0 0 11 12"><path d="M0.5 0h10v12L5.5 8 0.5 12z" fill="#3a8ede"/></svg>
<div class="t" style="left:148.5px;top:873.55px;font-size:12.83px;color:#3a8ede;font-weight:bold;letter-spacing:-0.524px;">Rencana dibanding Realisasi</div>
<div class="a" style="left:38px;top:914px;width:1821.2px;height:526.9px;border:1px solid #ddd;background:#fff"></div>
<div class="a" style="left:38px;top:914px;width:1821.2px;height:33px;background:#7b7b7b"></div>
<div class="a" style="left:39px;top:946.50px;width:1819.2px;height:35.24px;background:#f9f9f9"></div>
<div class="hl" style="left:38px;top:981.74px;width:1821.2px"></div>
<div class="a" style="left:39px;top:1016.99px;width:1819.2px;height:35.24px;background:#f9f9f9"></div>
<div class="hl" style="left:38px;top:1016.99px;width:1821.2px"></div>
<div class="hl" style="left:38px;top:1052.23px;width:1821.2px"></div>
<div class="a" style="left:39px;top:1087.47px;width:1819.2px;height:35.24px;background:#f9f9f9"></div>
<div class="hl" style="left:38px;top:1087.47px;width:1821.2px"></div>
<div class="hl" style="left:38px;top:1122.71px;width:1821.2px"></div>
<div class="a" style="left:39px;top:1157.96px;width:1819.2px;height:35.24px;background:#f9f9f9"></div>
<div class="hl" style="left:38px;top:1157.96px;width:1821.2px"></div>
<div class="hl" style="left:38px;top:1193.20px;width:1821.2px"></div>
<div class="a" style="left:39px;top:1228.44px;width:1819.2px;height:35.24px;background:#f9f9f9"></div>
<div class="hl" style="left:38px;top:1228.44px;width:1821.2px"></div>
<div class="hl" style="left:38px;top:1263.69px;width:1821.2px"></div>
<div class="a" style="left:39px;top:1298.93px;width:1819.2px;height:35.24px;background:#f9f9f9"></div>
<div class="hl" style="left:38px;top:1298.93px;width:1821.2px"></div>
<div class="hl" style="left:38px;top:1334.17px;width:1821.2px"></div>
<div class="a" style="left:39px;top:1369.41px;width:1819.2px;height:35.24px;background:#f9f9f9"></div>
<div class="hl" style="left:38px;top:1369.41px;width:1821.2px"></div>
<div class="hl" style="left:38px;top:1404.66px;width:1821.2px"></div>
<div class="vl" style="left:905.9px;top:914px;height:526.9px"></div>
<div class="vl" style="left:1120.8px;top:914px;height:526.9px"></div>
<div class="vl" style="left:1335.8px;top:914px;height:526.9px"></div>
<div class="vl" style="left:1443.7px;top:914px;height:526.9px"></div>
<div class="vl" style="left:1639.9px;top:914px;height:526.9px"></div>
<div class="t" style="left:42.6px;top:923.14px;font-size:12.3px;color:#fff;font-weight:bold;letter-spacing:0.47px;">NAMA</div>
<div class="t" style="left:910.7px;top:923.14px;font-size:12.3px;color:#fff;font-weight:bold;letter-spacing:0.006px;">WAKTU MULAI</div>
<div class="t" style="left:1125.8px;top:923.29px;font-size:11.87px;color:#fff;font-weight:bold;letter-spacing:-0.418px;">WAKTU SELESAI</div>
<div class="t" style="left:1340.8px;top:923.27px;font-size:11.92px;color:#fff;font-weight:bold;letter-spacing:-0.191px;">DURASI</div>
<div class="t" style="left:1449.1px;top:923.29px;font-size:11.87px;color:#fff;font-weight:bold;letter-spacing:-0.316px;">CATATAN</div>
<div class="t" style="left:1645.1px;top:923.29px;font-size:11.87px;color:#fff;font-weight:bold;letter-spacing:-0.715px;">AKSI</div>
<svg style="left:42.2px;top:957.0px" width="14" height="14" viewBox="0 0 14 14"><circle cx="5.8" cy="5.8" r="4.6" fill="none" stroke="#3a8ede" stroke-width="2.1"/><path d="M9.2 9.2l3.6 3.6" stroke="#3a8ede" stroke-width="2.4" stroke-linecap="round"/></svg>
<div class="t" style="left:59.3px;top:955.80px;font-size:13px;color:#3a8ede;letter-spacing:-0.185px;">Undangan Pendaftaran Peserta &amp; Download Dokumen Pengadaan</div>
<div class="badge bblue" style="left:439.3px;top:952.90px;width:48.1px"></div>
<div class="t" style="left:449.8px;top:955.80px;font-size:13px;color:#fff;letter-spacing:0.451px;-webkit-text-stroke:0.2px #fff">Aktif</div>
<div class="inp" style="left:911.3px;top:954.10px;width:175px"></div>
<div class="t" style="left:915.4px;top:956.41px;font-size:14.7px;color:#3c3c3c;letter-spacing:0px;">16/07/2025 8:00</div>
<div class="dots" style="left:1086.3px;top:953.30px;width:30.1px"></div>
<div class="t" style="left:1096.5px;top:957.84px;font-size:12px;color:#222;letter-spacing:0.3px;">...</div>
<div class="inp" style="left:1126.4px;top:954.10px;width:175px"></div>
<div class="t" style="left:1130.5px;top:956.41px;font-size:14.7px;color:#3c3c3c;letter-spacing:0px;">18/07/2025 16:00</div>
<div class="dots" style="left:1301.3px;top:953.30px;width:30.1px"></div>
<div class="t" style="left:1311.5px;top:957.84px;font-size:12px;color:#222;letter-spacing:0.3px;">...</div>
<div class="t" style="left:1340.8px;top:956.36px;font-size:12.8px;color:#333;letter-spacing:-0.017px;">2 Hari | 8 Jam</div>
<div class="btn bb" style="left:1645.1px;top:952.20px;width:57.6px;height:25.6px"></div>
<svg style="left:1651.5px;top:959.2px" width="15" height="12" viewBox="0 0 15 12"><ellipse cx="6" cy="4.3" rx="6" ry="4.2" fill="#fff"/><path d="M1.8 6.6L0.8 9.6 4.6 8z" fill="#fff"/><path d="M12.3 3.2c1.6.7 2.7 2 2.7 3.5 0 1.1-.6 2.1-1.5 2.8l.8 2.3-3.1-1.5c-.5.1-1 .2-1.5.2-2 0-3.7-.9-4.5-2.3 3.6-.2 6.5-2.3 7.1-5z" fill="#fff"/></svg>
<div class="t" style="left:1669.6px;top:957.25px;font-size:12.54px;color:#fff;letter-spacing:-0.328px;">Note</div>
<svg style="left:42.2px;top:992.2428571428571px" width="14" height="14" viewBox="0 0 14 14"><circle cx="5.8" cy="5.8" r="4.6" fill="none" stroke="#3a8ede" stroke-width="2.1"/><path d="M9.2 9.2l3.6 3.6" stroke="#3a8ede" stroke-width="2.4" stroke-linecap="round"/></svg>
<div class="t" style="left:59.3px;top:991.04px;font-size:13px;color:#3a8ede;letter-spacing:-0.158px;">Penjelasan Pekerjaan / Aanwijzing</div>
<div class="badge bgreen" style="left:257.5px;top:988.14px;width:96.1px"></div>
<div class="t" style="left:268.0px;top:991.04px;font-size:13px;color:#fff;letter-spacing:-0.204px;-webkit-text-stroke:0.2px #fff">2 Pertanyaan</div>
<div class="badge bred" style="left:357px;top:988.14px;width:61.5px"></div>
<div class="t" style="left:367.5px;top:991.04px;font-size:13px;color:#fff;letter-spacing:-0.357px;-webkit-text-stroke:0.2px #fff">Selesai</div>
<div class="inp" style="left:911.3px;top:989.34px;width:175px"></div>
<div class="t" style="left:915.4px;top:991.65px;font-size:14.7px;color:#3c3c3c;letter-spacing:0px;">16/07/2025 8:00</div>
<div class="dots" style="left:1086.3px;top:988.54px;width:30.1px"></div>
<div class="t" style="left:1096.5px;top:993.08px;font-size:12px;color:#222;letter-spacing:0.3px;">...</div>
<div class="inp" style="left:1126.4px;top:989.34px;width:175px"></div>
<div class="t" style="left:1130.5px;top:991.65px;font-size:14.7px;color:#3c3c3c;letter-spacing:0px;">16/07/2025 12:00</div>
<div class="dots" style="left:1301.3px;top:988.54px;width:30.1px"></div>
<div class="t" style="left:1311.5px;top:993.08px;font-size:12px;color:#222;letter-spacing:0.3px;">...</div>
<div class="t" style="left:1340.8px;top:991.61px;font-size:12.8px;color:#333;letter-spacing:-0.017px;">0 Hari | 4 Jam</div>
<div class="btn bb" style="left:1645.1px;top:987.44px;width:57.6px;height:25.6px"></div>
<svg style="left:1651.5px;top:994.4428571428572px" width="15" height="12" viewBox="0 0 15 12"><ellipse cx="6" cy="4.3" rx="6" ry="4.2" fill="#fff"/><path d="M1.8 6.6L0.8 9.6 4.6 8z" fill="#fff"/><path d="M12.3 3.2c1.6.7 2.7 2 2.7 3.5 0 1.1-.6 2.1-1.5 2.8l.8 2.3-3.1-1.5c-.5.1-1 .2-1.5.2-2 0-3.7-.9-4.5-2.3 3.6-.2 6.5-2.3 7.1-5z" fill="#fff"/></svg>
<div class="t" style="left:1669.6px;top:992.50px;font-size:12.54px;color:#fff;letter-spacing:-0.328px;">Note</div>
<div class="btn bb" style="left:1708.8px;top:987.44px;width:47px;height:25.6px"></div>
<svg style="left:1715.6px;top:993.2428571428571px" width="12.2" height="12.2" viewBox="0 0 12 12"><circle cx="2" cy="10" r="1.9" fill="#fff"/><path d="M0.2 5.5A6.3 6.3 0 0 1 6.5 11.8M0.2 1.2A10.6 10.6 0 0 1 10.8 11.8" fill="none" stroke="#fff" stroke-width="2.3"/></svg>
<div class="t" style="left:1730.1px;top:992.50px;font-size:12.54px;color:#fff;letter-spacing:-1.261px;">Log</div>
<svg style="left:42.2px;top:1027.4857142857143px" width="14" height="14" viewBox="0 0 14 14"><circle cx="5.8" cy="5.8" r="4.6" fill="none" stroke="#3a8ede" stroke-width="2.1"/><path d="M9.2 9.2l3.6 3.6" stroke="#3a8ede" stroke-width="2.4" stroke-linecap="round"/></svg>
<div class="t" style="left:59.3px;top:1026.29px;font-size:12.97px;color:#3a8ede;letter-spacing:-0.2px;">Pemasukan Penawaran (Administrasi, Teknis, &amp; Harga)</div>
<div class="badge bgreen" style="left:372.3px;top:1023.39px;width:81.3px"></div>
<div class="t" style="left:382.8px;top:1026.28px;font-size:13px;color:#fff;letter-spacing:-0.232px;-webkit-text-stroke:0.2px #fff">2 Penawar</div>
<div class="badge bred" style="left:458px;top:1023.39px;width:61.0px"></div>
<div class="t" style="left:468.5px;top:1026.28px;font-size:13px;color:#fff;letter-spacing:-0.44px;-webkit-text-stroke:0.2px #fff">Selesai</div>
<div class="inp" style="left:911.3px;top:1024.59px;width:175px"></div>
<div class="t" style="left:915.4px;top:1026.89px;font-size:14.7px;color:#3c3c3c;letter-spacing:0px;">16/07/2025 12:00</div>
<div class="dots" style="left:1086.3px;top:1023.79px;width:30.1px"></div>
<div class="t" style="left:1096.5px;top:1028.33px;font-size:12px;color:#222;letter-spacing:0.3px;">...</div>
<div class="inp" style="left:1126.4px;top:1024.59px;width:175px"></div>
<div class="t" style="left:1130.5px;top:1026.89px;font-size:14.7px;color:#3c3c3c;letter-spacing:0px;">17/07/2025 16:00</div>
<div class="dots" style="left:1301.3px;top:1023.79px;width:30.1px"></div>
<div class="t" style="left:1311.5px;top:1028.33px;font-size:12px;color:#222;letter-spacing:0.3px;">...</div>
<div class="t" style="left:1340.8px;top:1026.85px;font-size:12.8px;color:#333;letter-spacing:-0.017px;">1 Hari | 4 Jam</div>
<div class="btn bb" style="left:1645.1px;top:1022.69px;width:57.6px;height:25.6px"></div>
<svg style="left:1651.5px;top:1029.6857142857143px" width="15" height="12" viewBox="0 0 15 12"><ellipse cx="6" cy="4.3" rx="6" ry="4.2" fill="#fff"/><path d="M1.8 6.6L0.8 9.6 4.6 8z" fill="#fff"/><path d="M12.3 3.2c1.6.7 2.7 2 2.7 3.5 0 1.1-.6 2.1-1.5 2.8l.8 2.3-3.1-1.5c-.5.1-1 .2-1.5.2-2 0-3.7-.9-4.5-2.3 3.6-.2 6.5-2.3 7.1-5z" fill="#fff"/></svg>
<div class="t" style="left:1669.6px;top:1027.74px;font-size:12.54px;color:#fff;letter-spacing:-0.328px;">Note</div>
<div class="btn bb" style="left:1708.8px;top:1022.69px;width:47px;height:25.6px"></div>
<svg style="left:1715.6px;top:1028.4857142857143px" width="12.2" height="12.2" viewBox="0 0 12 12"><circle cx="2" cy="10" r="1.9" fill="#fff"/><path d="M0.2 5.5A6.3 6.3 0 0 1 6.5 11.8M0.2 1.2A10.6 10.6 0 0 1 10.8 11.8" fill="none" stroke="#fff" stroke-width="2.3"/></svg>
<div class="t" style="left:1730.1px;top:1027.74px;font-size:12.54px;color:#fff;letter-spacing:-1.261px;">Log</div>
<svg style="left:42.2px;top:1062.7285714285715px" width="14" height="14" viewBox="0 0 14 14"><circle cx="5.8" cy="5.8" r="4.6" fill="none" stroke="#3a8ede" stroke-width="2.1"/><path d="M9.2 9.2l3.6 3.6" stroke="#3a8ede" stroke-width="2.4" stroke-linecap="round"/></svg>
<div class="t" style="left:59.3px;top:1061.52px;font-size:13px;color:#3a8ede;letter-spacing:-0.188px;">Pembukaan Penawaran (Administrasi, Teknis, &amp; Harga)</div>
<div class="badge bred" style="left:373.8px;top:1058.63px;width:60.8px"></div>
<div class="t" style="left:384.3px;top:1061.52px;font-size:13px;color:#fff;letter-spacing:-0.473px;-webkit-text-stroke:0.2px #fff">Selesai</div>
<div class="inp" style="left:911.3px;top:1059.83px;width:175px"></div>
<div class="t" style="left:915.4px;top:1062.14px;font-size:14.7px;color:#3c3c3c;letter-spacing:0px;">16/07/2025 12:00</div>
<div class="dots" style="left:1086.3px;top:1059.03px;width:30.1px"></div>
<div class="t" style="left:1096.5px;top:1063.57px;font-size:12px;color:#222;letter-spacing:0.3px;">...</div>
<div class="inp" style="left:1126.4px;top:1059.83px;width:175px"></div>
<div class="t" style="left:1130.5px;top:1062.14px;font-size:14.7px;color:#3c3c3c;letter-spacing:0px;">17/07/2025 16:00</div>
<div class="dots" style="left:1301.3px;top:1059.03px;width:30.1px"></div>
<div class="t" style="left:1311.5px;top:1063.57px;font-size:12px;color:#222;letter-spacing:0.3px;">...</div>
<div class="t" style="left:1340.8px;top:1062.09px;font-size:12.8px;color:#333;letter-spacing:-0.017px;">1 Hari | 4 Jam</div>
<div class="btn bb" style="left:1645.1px;top:1057.93px;width:57.6px;height:25.6px"></div>
<svg style="left:1651.5px;top:1064.9285714285716px" width="15" height="12" viewBox="0 0 15 12"><ellipse cx="6" cy="4.3" rx="6" ry="4.2" fill="#fff"/><path d="M1.8 6.6L0.8 9.6 4.6 8z" fill="#fff"/><path d="M12.3 3.2c1.6.7 2.7 2 2.7 3.5 0 1.1-.6 2.1-1.5 2.8l.8 2.3-3.1-1.5c-.5.1-1 .2-1.5.2-2 0-3.7-.9-4.5-2.3 3.6-.2 6.5-2.3 7.1-5z" fill="#fff"/></svg>
<div class="t" style="left:1669.6px;top:1062.98px;font-size:12.54px;color:#fff;letter-spacing:-0.328px;">Note</div>
<div class="btn bb" style="left:1708.8px;top:1057.93px;width:47px;height:25.6px"></div>
<svg style="left:1715.6px;top:1063.7285714285715px" width="12.2" height="12.2" viewBox="0 0 12 12"><circle cx="2" cy="10" r="1.9" fill="#fff"/><path d="M0.2 5.5A6.3 6.3 0 0 1 6.5 11.8M0.2 1.2A10.6 10.6 0 0 1 10.8 11.8" fill="none" stroke="#fff" stroke-width="2.3"/></svg>
<div class="t" style="left:1730.1px;top:1062.98px;font-size:12.54px;color:#fff;letter-spacing:-1.261px;">Log</div>
<svg style="left:42.2px;top:1097.9714285714285px" width="14" height="14" viewBox="0 0 14 14"><circle cx="5.8" cy="5.8" r="4.6" fill="none" stroke="#3a8ede" stroke-width="2.1"/><path d="M9.2 9.2l3.6 3.6" stroke="#3a8ede" stroke-width="2.4" stroke-linecap="round"/></svg>
<div class="t" style="left:59.3px;top:1096.78px;font-size:12.96px;color:#3a8ede;letter-spacing:-0.197px;">Evaluasi Penawaran Administrasi</div>
<div class="badge bred" style="left:249.2px;top:1093.87px;width:60.5px"></div>
<div class="t" style="left:259.7px;top:1096.77px;font-size:13px;color:#fff;letter-spacing:-0.523px;-webkit-text-stroke:0.2px #fff">Selesai</div>
<div class="inp" style="left:911.3px;top:1095.07px;width:175px"></div>
<div class="t" style="left:915.4px;top:1097.38px;font-size:14.7px;color:#3c3c3c;letter-spacing:0px;">17/07/2025 14:00</div>
<div class="dots" style="left:1086.3px;top:1094.27px;width:30.1px"></div>
<div class="t" style="left:1096.5px;top:1098.81px;font-size:12px;color:#222;letter-spacing:0.3px;">...</div>
<div class="inp" style="left:1126.4px;top:1095.07px;width:175px"></div>
<div class="t" style="left:1130.5px;top:1097.38px;font-size:14.7px;color:#3c3c3c;letter-spacing:0px;">17/07/2025 16:00</div>
<div class="dots" style="left:1301.3px;top:1094.27px;width:30.1px"></div>
<div class="t" style="left:1311.5px;top:1098.81px;font-size:12px;color:#222;letter-spacing:0.3px;">...</div>
<div class="t" style="left:1340.8px;top:1097.34px;font-size:12.8px;color:#333;letter-spacing:-0.017px;">0 Hari | 2 Jam</div>
<div class="btn bb" style="left:1645.1px;top:1093.17px;width:57.6px;height:25.6px"></div>
<svg style="left:1651.5px;top:1100.1714285714286px" width="15" height="12" viewBox="0 0 15 12"><ellipse cx="6" cy="4.3" rx="6" ry="4.2" fill="#fff"/><path d="M1.8 6.6L0.8 9.6 4.6 8z" fill="#fff"/><path d="M12.3 3.2c1.6.7 2.7 2 2.7 3.5 0 1.1-.6 2.1-1.5 2.8l.8 2.3-3.1-1.5c-.5.1-1 .2-1.5.2-2 0-3.7-.9-4.5-2.3 3.6-.2 6.5-2.3 7.1-5z" fill="#fff"/></svg>
<div class="t" style="left:1669.6px;top:1098.23px;font-size:12.54px;color:#fff;letter-spacing:-0.328px;">Note</div>
<div class="btn bb" style="left:1708.8px;top:1093.17px;width:47px;height:25.6px"></div>
<svg style="left:1715.6px;top:1098.9714285714285px" width="12.2" height="12.2" viewBox="0 0 12 12"><circle cx="2" cy="10" r="1.9" fill="#fff"/><path d="M0.2 5.5A6.3 6.3 0 0 1 6.5 11.8M0.2 1.2A10.6 10.6 0 0 1 10.8 11.8" fill="none" stroke="#fff" stroke-width="2.3"/></svg>
<div class="t" style="left:1730.1px;top:1098.23px;font-size:12.54px;color:#fff;letter-spacing:-1.261px;">Log</div>
<svg style="left:42.2px;top:1133.2142857142858px" width="14" height="14" viewBox="0 0 14 14"><circle cx="5.8" cy="5.8" r="4.6" fill="none" stroke="#3a8ede" stroke-width="2.1"/><path d="M9.2 9.2l3.6 3.6" stroke="#3a8ede" stroke-width="2.4" stroke-linecap="round"/></svg>
<div class="t" style="left:59.3px;top:1132.13px;font-size:12.66px;color:#3a8ede;letter-spacing:-0.198px;">Evaluasi Penawaran Teknis</div>
<div class="badge bred" style="left:213.3px;top:1129.11px;width:61.4px"></div>
<div class="t" style="left:223.8px;top:1132.01px;font-size:13px;color:#fff;letter-spacing:-0.373px;-webkit-text-stroke:0.2px #fff">Selesai</div>
<div class="inp" style="left:911.3px;top:1130.31px;width:175px"></div>
<div class="t" style="left:915.4px;top:1132.62px;font-size:14.7px;color:#3c3c3c;letter-spacing:0px;">17/07/2025 14:00</div>
<div class="dots" style="left:1086.3px;top:1129.51px;width:30.1px"></div>
<div class="t" style="left:1096.5px;top:1134.06px;font-size:12px;color:#222;letter-spacing:0.3px;">...</div>
<div class="inp" style="left:1126.4px;top:1130.31px;width:175px"></div>
<div class="t" style="left:1130.5px;top:1132.62px;font-size:14.7px;color:#3c3c3c;letter-spacing:0px;">17/07/2025 16:00</div>
<div class="dots" style="left:1301.3px;top:1129.51px;width:30.1px"></div>
<div class="t" style="left:1311.5px;top:1134.06px;font-size:12px;color:#222;letter-spacing:0.3px;">...</div>
<div class="t" style="left:1340.8px;top:1132.58px;font-size:12.8px;color:#333;letter-spacing:-0.017px;">0 Hari | 2 Jam</div>
<div class="btn bb" style="left:1645.1px;top:1128.41px;width:57.6px;height:25.6px"></div>
<svg style="left:1651.5px;top:1135.4142857142858px" width="15" height="12" viewBox="0 0 15 12"><ellipse cx="6" cy="4.3" rx="6" ry="4.2" fill="#fff"/><path d="M1.8 6.6L0.8 9.6 4.6 8z" fill="#fff"/><path d="M12.3 3.2c1.6.7 2.7 2 2.7 3.5 0 1.1-.6 2.1-1.5 2.8l.8 2.3-3.1-1.5c-.5.1-1 .2-1.5.2-2 0-3.7-.9-4.5-2.3 3.6-.2 6.5-2.3 7.1-5z" fill="#fff"/></svg>
<div class="t" style="left:1669.6px;top:1133.47px;font-size:12.54px;color:#fff;letter-spacing:-0.328px;">Note</div>
<div class="btn bb" style="left:1708.8px;top:1128.41px;width:47px;height:25.6px"></div>
<svg style="left:1715.6px;top:1134.2142857142858px" width="12.2" height="12.2" viewBox="0 0 12 12"><circle cx="2" cy="10" r="1.9" fill="#fff"/><path d="M0.2 5.5A6.3 6.3 0 0 1 6.5 11.8M0.2 1.2A10.6 10.6 0 0 1 10.8 11.8" fill="none" stroke="#fff" stroke-width="2.3"/></svg>
<div class="t" style="left:1730.1px;top:1133.47px;font-size:12.54px;color:#fff;letter-spacing:-1.261px;">Log</div>
<svg style="left:42.2px;top:1168.4571428571428px" width="14" height="14" viewBox="0 0 14 14"><circle cx="5.8" cy="5.8" r="4.6" fill="none" stroke="#3a8ede" stroke-width="2.1"/><path d="M9.2 9.2l3.6 3.6" stroke="#3a8ede" stroke-width="2.4" stroke-linecap="round"/></svg>
<div class="t" style="left:59.3px;top:1167.39px;font-size:12.59px;color:#3a8ede;letter-spacing:-0.193px;">Evaluasi Penawaran Harga</div>
<div class="badge bred" style="left:211.1px;top:1164.36px;width:61.7px"></div>
<div class="t" style="left:221.6px;top:1167.25px;font-size:13px;color:#fff;letter-spacing:-0.323px;-webkit-text-stroke:0.2px #fff">Selesai</div>
<div class="inp" style="left:911.3px;top:1165.56px;width:175px"></div>
<div class="t" style="left:915.4px;top:1167.86px;font-size:14.7px;color:#3c3c3c;letter-spacing:0px;">17/07/2025 14:00</div>
<div class="dots" style="left:1086.3px;top:1164.76px;width:30.1px"></div>
<div class="t" style="left:1096.5px;top:1169.30px;font-size:12px;color:#222;letter-spacing:0.3px;">...</div>
<div class="inp" style="left:1126.4px;top:1165.56px;width:175px"></div>
<div class="t" style="left:1130.5px;top:1167.86px;font-size:14.7px;color:#3c3c3c;letter-spacing:0px;">17/07/2025 16:00</div>
<div class="dots" style="left:1301.3px;top:1164.76px;width:30.1px"></div>
<div class="t" style="left:1311.5px;top:1169.30px;font-size:12px;color:#222;letter-spacing:0.3px;">...</div>
<div class="t" style="left:1340.8px;top:1167.82px;font-size:12.8px;color:#333;letter-spacing:-0.017px;">0 Hari | 2 Jam</div>
<div class="btn bb" style="left:1645.1px;top:1163.66px;width:57.6px;height:25.6px"></div>
<svg style="left:1651.5px;top:1170.6571428571428px" width="15" height="12" viewBox="0 0 15 12"><ellipse cx="6" cy="4.3" rx="6" ry="4.2" fill="#fff"/><path d="M1.8 6.6L0.8 9.6 4.6 8z" fill="#fff"/><path d="M12.3 3.2c1.6.7 2.7 2 2.7 3.5 0 1.1-.6 2.1-1.5 2.8l.8 2.3-3.1-1.5c-.5.1-1 .2-1.5.2-2 0-3.7-.9-4.5-2.3 3.6-.2 6.5-2.3 7.1-5z" fill="#fff"/></svg>
<div class="t" style="left:1669.6px;top:1168.71px;font-size:12.54px;color:#fff;letter-spacing:-0.328px;">Note</div>
<div class="btn bb" style="left:1708.8px;top:1163.66px;width:47px;height:25.6px"></div>
<svg style="left:1715.6px;top:1169.4571428571428px" width="12.2" height="12.2" viewBox="0 0 12 12"><circle cx="2" cy="10" r="1.9" fill="#fff"/><path d="M0.2 5.5A6.3 6.3 0 0 1 6.5 11.8M0.2 1.2A10.6 10.6 0 0 1 10.8 11.8" fill="none" stroke="#fff" stroke-width="2.3"/></svg>
<div class="t" style="left:1730.1px;top:1168.71px;font-size:12.54px;color:#fff;letter-spacing:-1.261px;">Log</div>
<svg style="left:42.2px;top:1203.7px" width="14" height="14" viewBox="0 0 14 14"><circle cx="5.8" cy="5.8" r="4.6" fill="none" stroke="#3a8ede" stroke-width="2.1"/><path d="M9.2 9.2l3.6 3.6" stroke="#3a8ede" stroke-width="2.4" stroke-linecap="round"/></svg>
<div class="t" style="left:59.3px;top:1202.52px;font-size:12.92px;color:#3a8ede;letter-spacing:-0.192px;">Klarifikasi dan Negosiasi</div>
<div class="badge bblue" style="left:199.1px;top:1199.60px;width:48.6px"></div>
<div class="t" style="left:209.6px;top:1202.50px;font-size:13px;color:#fff;letter-spacing:0.576px;-webkit-text-stroke:0.2px #fff">Aktif</div>
<div class="inp" style="left:911.3px;top:1200.80px;width:175px"></div>
<div class="t" style="left:915.4px;top:1203.11px;font-size:14.7px;color:#3c3c3c;letter-spacing:0px;">17/07/2025 14:00</div>
<div class="dots" style="left:1086.3px;top:1200.00px;width:30.1px"></div>
<div class="t" style="left:1096.5px;top:1204.54px;font-size:12px;color:#222;letter-spacing:0.3px;">...</div>
<div class="inp" style="left:1126.4px;top:1200.80px;width:175px"></div>
<div class="t" style="left:1130.5px;top:1203.11px;font-size:14.7px;color:#3c3c3c;letter-spacing:0px;">17/07/2025 18:00</div>
<div class="dots" style="left:1301.3px;top:1200.00px;width:30.1px"></div>
<div class="t" style="left:1311.5px;top:1204.54px;font-size:12px;color:#222;letter-spacing:0.3px;">...</div>
<div class="t" style="left:1340.8px;top:1203.06px;font-size:12.8px;color:#333;letter-spacing:-0.017px;">0 Hari | 4 Jam</div>
<div class="btn bb" style="left:1645.1px;top:1198.90px;width:57.6px;height:25.6px"></div>
<svg style="left:1651.5px;top:1205.9px" width="15" height="12" viewBox="0 0 15 12"><ellipse cx="6" cy="4.3" rx="6" ry="4.2" fill="#fff"/><path d="M1.8 6.6L0.8 9.6 4.6 8z" fill="#fff"/><path d="M12.3 3.2c1.6.7 2.7 2 2.7 3.5 0 1.1-.6 2.1-1.5 2.8l.8 2.3-3.1-1.5c-.5.1-1 .2-1.5.2-2 0-3.7-.9-4.5-2.3 3.6-.2 6.5-2.3 7.1-5z" fill="#fff"/></svg>
<div class="t" style="left:1669.6px;top:1203.95px;font-size:12.54px;color:#fff;letter-spacing:-0.328px;">Note</div>
<div class="btn bb" style="left:1708.8px;top:1198.90px;width:47px;height:25.6px"></div>
<svg style="left:1715.6px;top:1204.7px" width="12.2" height="12.2" viewBox="0 0 12 12"><circle cx="2" cy="10" r="1.9" fill="#fff"/><path d="M0.2 5.5A6.3 6.3 0 0 1 6.5 11.8M0.2 1.2A10.6 10.6 0 0 1 10.8 11.8" fill="none" stroke="#fff" stroke-width="2.3"/></svg>
<div class="t" style="left:1730.1px;top:1203.95px;font-size:12.54px;color:#fff;letter-spacing:-1.261px;">Log</div>
<div class="t" style="left:42.6px;top:1237.74px;font-size:13px;color:#222;letter-spacing:-0.173px;">Usulan Memo Penetapan Pemenang</div>
<div class="badge bblue" style="left:254.2px;top:1234.84px;width:48.7px"></div>
<div class="t" style="left:264.7px;top:1237.74px;font-size:13px;color:#fff;letter-spacing:0.601px;-webkit-text-stroke:0.2px #fff">Aktif</div>
<div class="inp" style="left:911.3px;top:1236.04px;width:175px"></div>
<div class="t" style="left:915.4px;top:1238.35px;font-size:14.7px;color:#3c3c3c;letter-spacing:0px;">17/07/2025 14:00</div>
<div class="dots" style="left:1086.3px;top:1235.24px;width:30.1px"></div>
<div class="t" style="left:1096.5px;top:1239.78px;font-size:12px;color:#222;letter-spacing:0.3px;">...</div>
<div class="inp" style="left:1126.4px;top:1236.04px;width:175px"></div>
<div class="t" style="left:1130.5px;top:1238.35px;font-size:14.7px;color:#3c3c3c;letter-spacing:0px;">17/07/2025 18:00</div>
<div class="dots" style="left:1301.3px;top:1235.24px;width:30.1px"></div>
<div class="t" style="left:1311.5px;top:1239.78px;font-size:12px;color:#222;letter-spacing:0.3px;">...</div>
<div class="t" style="left:1340.8px;top:1238.31px;font-size:12.8px;color:#333;letter-spacing:-0.017px;">0 Hari | 4 Jam</div>
<div class="btn bb" style="left:1645.1px;top:1234.14px;width:57.6px;height:25.6px"></div>
<svg style="left:1651.5px;top:1241.142857142857px" width="15" height="12" viewBox="0 0 15 12"><ellipse cx="6" cy="4.3" rx="6" ry="4.2" fill="#fff"/><path d="M1.8 6.6L0.8 9.6 4.6 8z" fill="#fff"/><path d="M12.3 3.2c1.6.7 2.7 2 2.7 3.5 0 1.1-.6 2.1-1.5 2.8l.8 2.3-3.1-1.5c-.5.1-1 .2-1.5.2-2 0-3.7-.9-4.5-2.3 3.6-.2 6.5-2.3 7.1-5z" fill="#fff"/></svg>
<div class="t" style="left:1669.6px;top:1239.20px;font-size:12.54px;color:#fff;letter-spacing:-0.328px;">Note</div>
<div class="btn bb" style="left:1708.8px;top:1234.14px;width:47px;height:25.6px"></div>
<svg style="left:1715.6px;top:1239.942857142857px" width="12.2" height="12.2" viewBox="0 0 12 12"><circle cx="2" cy="10" r="1.9" fill="#fff"/><path d="M0.2 5.5A6.3 6.3 0 0 1 6.5 11.8M0.2 1.2A10.6 10.6 0 0 1 10.8 11.8" fill="none" stroke="#fff" stroke-width="2.3"/></svg>
<div class="t" style="left:1730.1px;top:1239.20px;font-size:12.54px;color:#fff;letter-spacing:-1.261px;">Log</div>
<svg style="left:42.2px;top:1274.1857142857143px" width="14" height="14" viewBox="0 0 14 14"><circle cx="5.8" cy="5.8" r="4.6" fill="none" stroke="#3a8ede" stroke-width="2.1"/><path d="M9.2 9.2l3.6 3.6" stroke="#3a8ede" stroke-width="2.4" stroke-linecap="round"/></svg>
<div class="t" style="left:59.3px;top:1273.05px;font-size:12.79px;color:#3a8ede;letter-spacing:-0.195px;">Penetapan Pemenang</div>
<div class="badge bblue" style="left:187.2px;top:1270.09px;width:48.6px"></div>
<div class="t" style="left:197.7px;top:1272.98px;font-size:13px;color:#fff;letter-spacing:0.576px;-webkit-text-stroke:0.2px #fff">Aktif</div>
<div class="inp" style="left:911.3px;top:1271.29px;width:175px"></div>
<div class="t" style="left:915.4px;top:1273.59px;font-size:14.7px;color:#3c3c3c;letter-spacing:0px;">17/07/2025 14:00</div>
<div class="dots" style="left:1086.3px;top:1270.49px;width:30.1px"></div>
<div class="t" style="left:1096.5px;top:1275.03px;font-size:12px;color:#222;letter-spacing:0.3px;">...</div>
<div class="inp" style="left:1126.4px;top:1271.29px;width:175px"></div>
<div class="t" style="left:1130.5px;top:1273.59px;font-size:14.7px;color:#3c3c3c;letter-spacing:0px;">17/07/2025 18:00</div>
<div class="dots" style="left:1301.3px;top:1270.49px;width:30.1px"></div>
<div class="t" style="left:1311.5px;top:1275.03px;font-size:12px;color:#222;letter-spacing:0.3px;">...</div>
<div class="t" style="left:1340.8px;top:1273.55px;font-size:12.8px;color:#333;letter-spacing:-0.017px;">0 Hari | 4 Jam</div>
<div class="btn bb" style="left:1645.1px;top:1269.39px;width:57.6px;height:25.6px"></div>
<svg style="left:1651.5px;top:1276.3857142857144px" width="15" height="12" viewBox="0 0 15 12"><ellipse cx="6" cy="4.3" rx="6" ry="4.2" fill="#fff"/><path d="M1.8 6.6L0.8 9.6 4.6 8z" fill="#fff"/><path d="M12.3 3.2c1.6.7 2.7 2 2.7 3.5 0 1.1-.6 2.1-1.5 2.8l.8 2.3-3.1-1.5c-.5.1-1 .2-1.5.2-2 0-3.7-.9-4.5-2.3 3.6-.2 6.5-2.3 7.1-5z" fill="#fff"/></svg>
<div class="t" style="left:1669.6px;top:1274.44px;font-size:12.54px;color:#fff;letter-spacing:-0.328px;">Note</div>
<div class="btn bb" style="left:1708.8px;top:1269.39px;width:47px;height:25.6px"></div>
<svg style="left:1715.6px;top:1275.1857142857143px" width="12.2" height="12.2" viewBox="0 0 12 12"><circle cx="2" cy="10" r="1.9" fill="#fff"/><path d="M0.2 5.5A6.3 6.3 0 0 1 6.5 11.8M0.2 1.2A10.6 10.6 0 0 1 10.8 11.8" fill="none" stroke="#fff" stroke-width="2.3"/></svg>
<div class="t" style="left:1730.1px;top:1274.44px;font-size:12.54px;color:#fff;letter-spacing:-1.261px;">Log</div>
<div class="t" style="left:42.6px;top:1308.26px;font-size:12.89px;color:#222;letter-spacing:-0.19px;">Pengumuman Pemenang</div>
<div class="badge bblue" style="left:189.1px;top:1305.33px;width:48.9px"></div>
<div class="t" style="left:199.6px;top:1308.22px;font-size:13px;color:#fff;letter-spacing:0.651px;-webkit-text-stroke:0.2px #fff">Aktif</div>
<div class="inp" style="left:911.3px;top:1306.53px;width:175px"></div>
<div class="t" style="left:915.4px;top:1308.84px;font-size:14.7px;color:#3c3c3c;letter-spacing:0px;">17/07/2025 14:00</div>
<div class="dots" style="left:1086.3px;top:1305.73px;width:30.1px"></div>
<div class="t" style="left:1096.5px;top:1310.27px;font-size:12px;color:#222;letter-spacing:0.3px;">...</div>
<div class="inp" style="left:1126.4px;top:1306.53px;width:175px"></div>
<div class="t" style="left:1130.5px;top:1308.84px;font-size:14.7px;color:#3c3c3c;letter-spacing:0px;">17/07/2025 18:00</div>
<div class="dots" style="left:1301.3px;top:1305.73px;width:30.1px"></div>
<div class="t" style="left:1311.5px;top:1310.27px;font-size:12px;color:#222;letter-spacing:0.3px;">...</div>
<div class="t" style="left:1340.8px;top:1308.79px;font-size:12.8px;color:#333;letter-spacing:-0.017px;">0 Hari | 4 Jam</div>
<div class="btn bb" style="left:1645.1px;top:1304.63px;width:57.6px;height:25.6px"></div>
<svg style="left:1651.5px;top:1311.6285714285716px" width="15" height="12" viewBox="0 0 15 12"><ellipse cx="6" cy="4.3" rx="6" ry="4.2" fill="#fff"/><path d="M1.8 6.6L0.8 9.6 4.6 8z" fill="#fff"/><path d="M12.3 3.2c1.6.7 2.7 2 2.7 3.5 0 1.1-.6 2.1-1.5 2.8l.8 2.3-3.1-1.5c-.5.1-1 .2-1.5.2-2 0-3.7-.9-4.5-2.3 3.6-.2 6.5-2.3 7.1-5z" fill="#fff"/></svg>
<div class="t" style="left:1669.6px;top:1309.68px;font-size:12.54px;color:#fff;letter-spacing:-0.328px;">Note</div>
<div class="btn bb" style="left:1708.8px;top:1304.63px;width:47px;height:25.6px"></div>
<svg style="left:1715.6px;top:1310.4285714285716px" width="12.2" height="12.2" viewBox="0 0 12 12"><circle cx="2" cy="10" r="1.9" fill="#fff"/><path d="M0.2 5.5A6.3 6.3 0 0 1 6.5 11.8M0.2 1.2A10.6 10.6 0 0 1 10.8 11.8" fill="none" stroke="#fff" stroke-width="2.3"/></svg>
<div class="t" style="left:1730.1px;top:1309.68px;font-size:12.54px;color:#fff;letter-spacing:-1.261px;">Log</div>
<svg style="left:42.2px;top:1344.6714285714286px" width="14" height="14" viewBox="0 0 14 14"><circle cx="5.8" cy="5.8" r="4.6" fill="none" stroke="#3a8ede" stroke-width="2.1"/><path d="M9.2 9.2l3.6 3.6" stroke="#3a8ede" stroke-width="2.4" stroke-linecap="round"/></svg>
<div class="t" style="left:59.3px;top:1343.63px;font-size:12.54px;color:#3a8ede;letter-spacing:-0.31px;">Masa Sanggah</div>
<div class="badge bgreen" style="left:144.1px;top:1340.57px;width:97.7px"></div>
<div class="t" style="left:154.6px;top:1343.47px;font-size:13px;color:#fff;letter-spacing:-0.059px;-webkit-text-stroke:0.2px #fff">0 Pertanyaan</div>
<div class="badge bblue" style="left:244.9px;top:1340.57px;width:49.0px"></div>
<div class="t" style="left:255.4px;top:1343.47px;font-size:13px;color:#fff;letter-spacing:0.676px;-webkit-text-stroke:0.2px #fff">Aktif</div>
<div class="inp" style="left:911.3px;top:1341.77px;width:175px"></div>
<div class="t" style="left:915.4px;top:1344.08px;font-size:14.7px;color:#3c3c3c;letter-spacing:0px;">17/07/2025 14:00</div>
<div class="dots" style="left:1086.3px;top:1340.97px;width:30.1px"></div>
<div class="t" style="left:1096.5px;top:1345.51px;font-size:12px;color:#222;letter-spacing:0.3px;">...</div>
<div class="inp" style="left:1126.4px;top:1341.77px;width:175px"></div>
<div class="t" style="left:1130.5px;top:1344.08px;font-size:14.7px;color:#3c3c3c;letter-spacing:0px;">17/07/2025 18:00</div>
<div class="dots" style="left:1301.3px;top:1340.97px;width:30.1px"></div>
<div class="t" style="left:1311.5px;top:1345.51px;font-size:12px;color:#222;letter-spacing:0.3px;">...</div>
<div class="t" style="left:1340.8px;top:1344.04px;font-size:12.8px;color:#333;letter-spacing:-0.017px;">0 Hari | 4 Jam</div>
<div class="btn bb" style="left:1645.1px;top:1339.87px;width:57.6px;height:25.6px"></div>
<svg style="left:1651.5px;top:1346.8714285714286px" width="15" height="12" viewBox="0 0 15 12"><ellipse cx="6" cy="4.3" rx="6" ry="4.2" fill="#fff"/><path d="M1.8 6.6L0.8 9.6 4.6 8z" fill="#fff"/><path d="M12.3 3.2c1.6.7 2.7 2 2.7 3.5 0 1.1-.6 2.1-1.5 2.8l.8 2.3-3.1-1.5c-.5.1-1 .2-1.5.2-2 0-3.7-.9-4.5-2.3 3.6-.2 6.5-2.3 7.1-5z" fill="#fff"/></svg>
<div class="t" style="left:1669.6px;top:1344.93px;font-size:12.54px;color:#fff;letter-spacing:-0.328px;">Note</div>
<div class="btn bb" style="left:1708.8px;top:1339.87px;width:47px;height:25.6px"></div>
<svg style="left:1715.6px;top:1345.6714285714286px" width="12.2" height="12.2" viewBox="0 0 12 12"><circle cx="2" cy="10" r="1.9" fill="#fff"/><path d="M0.2 5.5A6.3 6.3 0 0 1 6.5 11.8M0.2 1.2A10.6 10.6 0 0 1 10.8 11.8" fill="none" stroke="#fff" stroke-width="2.3"/></svg>
<div class="t" style="left:1730.1px;top:1344.93px;font-size:12.54px;color:#fff;letter-spacing:-1.261px;">Log</div>
<svg style="left:42.2px;top:1379.9142857142858px" width="14" height="14" viewBox="0 0 14 14"><circle cx="5.8" cy="5.8" r="4.6" fill="none" stroke="#3a8ede" stroke-width="2.1"/><path d="M9.2 9.2l3.6 3.6" stroke="#3a8ede" stroke-width="2.4" stroke-linecap="round"/></svg>
<div class="t" style="left:59.3px;top:1378.75px;font-size:12.87px;color:#3a8ede;letter-spacing:-0.192px;">Surat Penunjukan Pemenang</div>
<div class="badge borange" style="left:226.1px;top:1375.81px;width:88.6px"></div>
<div class="t" style="left:236.6px;top:1378.71px;font-size:13px;color:#fff;letter-spacing:0.257px;-webkit-text-stroke:0.2px #fff">Belum Aktif</div>
<div class="inp" style="left:911.3px;top:1377.01px;width:175px"></div>
<div class="t" style="left:915.4px;top:1379.32px;font-size:14.7px;color:#3c3c3c;letter-spacing:0px;">31/07/2025 8:00</div>
<div class="dots" style="left:1086.3px;top:1376.21px;width:30.1px"></div>
<div class="t" style="left:1096.5px;top:1380.76px;font-size:12px;color:#222;letter-spacing:0.3px;">...</div>
<div class="inp" style="left:1126.4px;top:1377.01px;width:175px"></div>
<div class="t" style="left:1130.5px;top:1379.32px;font-size:14.7px;color:#3c3c3c;letter-spacing:0px;">31/07/2025 16:00</div>
<div class="dots" style="left:1301.3px;top:1376.21px;width:30.1px"></div>
<div class="t" style="left:1311.5px;top:1380.76px;font-size:12px;color:#222;letter-spacing:0.3px;">...</div>
<div class="t" style="left:1340.8px;top:1379.28px;font-size:12.8px;color:#333;letter-spacing:-0.017px;">0 Hari | 8 Jam</div>
<div class="btn bb" style="left:1645.1px;top:1375.11px;width:57.6px;height:25.6px"></div>
<svg style="left:1651.5px;top:1382.1142857142859px" width="15" height="12" viewBox="0 0 15 12"><ellipse cx="6" cy="4.3" rx="6" ry="4.2" fill="#fff"/><path d="M1.8 6.6L0.8 9.6 4.6 8z" fill="#fff"/><path d="M12.3 3.2c1.6.7 2.7 2 2.7 3.5 0 1.1-.6 2.1-1.5 2.8l.8 2.3-3.1-1.5c-.5.1-1 .2-1.5.2-2 0-3.7-.9-4.5-2.3 3.6-.2 6.5-2.3 7.1-5z" fill="#fff"/></svg>
<div class="t" style="left:1669.6px;top:1380.17px;font-size:12.54px;color:#fff;letter-spacing:-0.328px;">Note</div>
<div class="t" style="left:42.6px;top:1413.96px;font-size:12.97px;color:#222;letter-spacing:-0.2px;">Kontrak/SPMK/PO</div>
<div class="badge borange" style="left:151px;top:1411.06px;width:88.7px"></div>
<div class="t" style="left:161.5px;top:1413.95px;font-size:13px;color:#fff;letter-spacing:0.267px;-webkit-text-stroke:0.2px #fff">Belum Aktif</div>
<div class="inp" style="left:911.3px;top:1412.26px;width:175px"></div>
<div class="t" style="left:915.4px;top:1414.56px;font-size:14.7px;color:#3c3c3c;letter-spacing:0px;">01/08/2025 8:00</div>
<div class="dots" style="left:1086.3px;top:1411.46px;width:30.1px"></div>
<div class="t" style="left:1096.5px;top:1416.00px;font-size:12px;color:#222;letter-spacing:0.3px;">...</div>
<div class="inp" style="left:1126.4px;top:1412.26px;width:175px"></div>
<div class="t" style="left:1130.5px;top:1414.56px;font-size:14.7px;color:#3c3c3c;letter-spacing:0px;">03/08/2025 16:00</div>
<div class="dots" style="left:1301.3px;top:1411.46px;width:30.1px"></div>
<div class="t" style="left:1311.5px;top:1416.00px;font-size:12px;color:#222;letter-spacing:0.3px;">...</div>
<div class="t" style="left:1340.8px;top:1414.52px;font-size:12.8px;color:#333;letter-spacing:-0.017px;">2 Hari | 8 Jam</div>
<div class="btn bb" style="left:1645.1px;top:1410.36px;width:57.6px;height:25.6px"></div>
<svg style="left:1651.5px;top:1417.357142857143px" width="15" height="12" viewBox="0 0 15 12"><ellipse cx="6" cy="4.3" rx="6" ry="4.2" fill="#fff"/><path d="M1.8 6.6L0.8 9.6 4.6 8z" fill="#fff"/><path d="M12.3 3.2c1.6.7 2.7 2 2.7 3.5 0 1.1-.6 2.1-1.5 2.8l.8 2.3-3.1-1.5c-.5.1-1 .2-1.5.2-2 0-3.7-.9-4.5-2.3 3.6-.2 6.5-2.3 7.1-5z" fill="#fff"/></svg>
<div class="t" style="left:1669.6px;top:1415.41px;font-size:12.54px;color:#fff;letter-spacing:-0.328px;">Note</div>
<div class="sb" style="left:1717px;top:1456px;width:140px;height:24.5px"></div>
<svg style="left:1721.5px;top:1462.5px" width="13" height="11" viewBox="0 0 13 11"><path d="M1 5.4l3.6 3.6L12 1.6" fill="none" stroke="#fff" stroke-width="3.4"/></svg>
<div class="t" style="left:1738.3px;top:1460.68px;font-size:13.9px;color:#fff;letter-spacing:-0.462px;">Simpan &amp;</div>
<svg style="left:1798.8px;top:1462px" width="11" height="11" viewBox="0 0 11 11"><path d="M5.5 0v11M0 5.5h11" stroke="#fff" stroke-width="3.2"/></svg>
<div class="t" style="left:1813.4px;top:1460.68px;font-size:13.9px;color:#fff;letter-spacing:-0.497px;">Alasan</div>
<svg style="left:0;top:1524px" width="5" height="8" viewBox="0 0 5 8"><path d="M0 0L4 8H0z" fill="#222"/></svg>
</body></html>
